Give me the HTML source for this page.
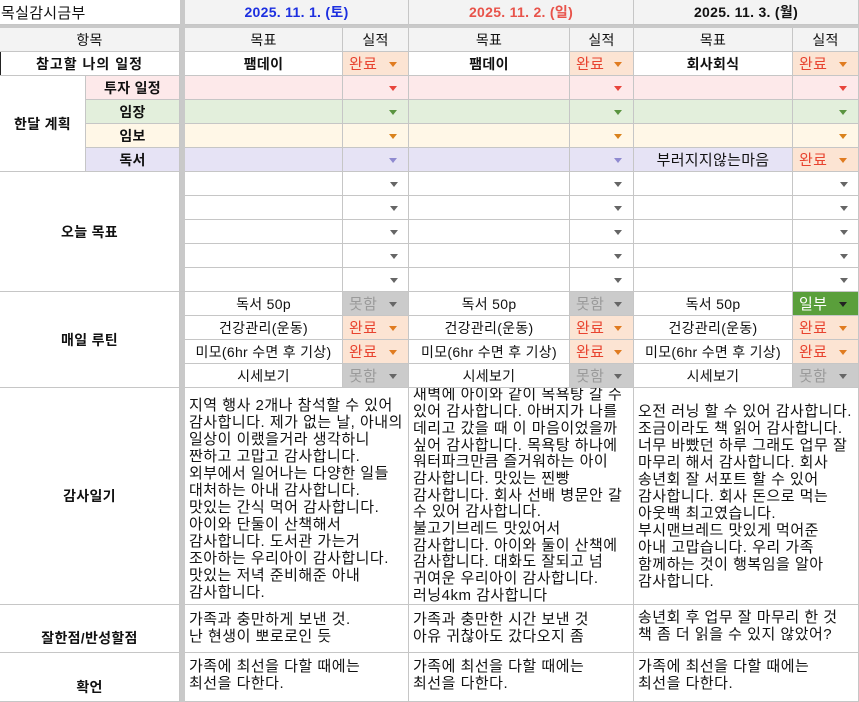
<!DOCTYPE html>
<html><head><meta charset="utf-8"><style>
*{margin:0;padding:0;box-sizing:border-box}
body{width:859px;height:702px;position:relative;background:#fff;font-family:"Liberation Sans","Noto Sans CJK KR",sans-serif;font-size:14px;color:#111;overflow:hidden}
.c{position:absolute;border-right:1px solid #c6c6c6;border-bottom:1px solid #c6c6c6;display:flex;align-items:center;justify-content:center;white-space:nowrap;letter-spacing:0.3px}
.b{font-weight:bold}
.h{background:#f3f3f3}
.dd{justify-content:flex-start;padding-left:6px;font-size:15px}
.t{position:absolute;right:11px;top:50%;margin-top:-2px;width:0;height:0;border-left:4px solid transparent;border-right:4px solid transparent;border-top:5px solid #666}
.or{background:#fce4d3;color:#e8432f}.or .t{border-top-color:#e07b20}
.gr{background:#cbcbcb;color:#9a9a9a}.gr .t{border-top-color:#666}
.gn{background:#5a9f3b;color:#fff}.gn .t{border-top-color:#222}
.pk{background:#fde9ea}.pk .t{border-top-color:#e8453c}
.ge{background:#e3efdc}.ge .t{border-top-color:#5a9440}
.ye{background:#fff7e7}.ye .t{border-top-color:#d9821d}
.pu{background:#e6e3f5}.pu .t{border-top-color:#8f8ad0}
.txt{align-items:flex-start;justify-content:flex-start;padding:0 4px;white-space:pre;line-height:17px;font-size:15px;letter-spacing:0.5px}
</style></head><body>
<div style="position:absolute;left:180px;top:0;width:5px;height:702px;background:#c9c9c9"></div>
<div style="position:absolute;left:0;top:25px;width:859px;height:3px;background:#c9c9c9"></div>
<div style="position:absolute;left:0;top:28px;width:1px;height:48px;background:#222"></div>

<div class="c" style="left:0;top:0;width:180px;height:25px;justify-content:flex-start;padding-left:1px;border-right:none;font-size:15px">목실감시금부</div>
<div class="c h b" style="left:185px;top:0;width:224px;height:25px;color:#1c2fe0">2025. 11. 1. (토)</div>
<div class="c h b" style="left:409px;top:0;width:225px;height:25px;color:#e8534a">2025. 11. 2. (일)</div>
<div class="c h b" style="left:634px;top:0;width:225px;height:25px">2025. 11. 3. (월)</div>

<div class="c h" style="left:0;top:28px;width:180px;height:24px">항목</div>
<div class="c h" style="left:185px;top:28px;width:158px;height:24px">목표</div>
<div class="c h" style="left:343px;top:28px;width:66px;height:24px">실적</div>
<div class="c h" style="left:409px;top:28px;width:161px;height:24px">목표</div>
<div class="c h" style="left:570px;top:28px;width:64px;height:24px">실적</div>
<div class="c h" style="left:634px;top:28px;width:159px;height:24px">목표</div>
<div class="c h" style="left:793px;top:28px;width:66px;height:24px">실적</div>

<div class="c b" style="left:0;top:52px;width:180px;height:24px;letter-spacing:1px">참고할 나의 일정</div>
<div class="c b" style="left:185px;top:52px;width:158px;height:24px">팸데이</div>
<div class="c dd or" style="left:343px;top:52px;width:66px;height:24px">완료<span class="t"></span></div>
<div class="c b" style="left:409px;top:52px;width:161px;height:24px">팸데이</div>
<div class="c dd or" style="left:570px;top:52px;width:64px;height:24px">완료<span class="t"></span></div>
<div class="c b" style="left:634px;top:52px;width:159px;height:24px">회사회식</div>
<div class="c dd or" style="left:793px;top:52px;width:66px;height:24px">완료<span class="t"></span></div>

<div class="c b" style="left:0;top:76px;width:86px;height:96px">한달 계획</div>
<div class="c b pk" style="left:86px;top:76px;width:94px;height:24px">투자 일정</div>
<div class="c b ge" style="left:86px;top:100px;width:94px;height:24px">임장</div>
<div class="c b ye" style="left:86px;top:124px;width:94px;height:24px">임보</div>
<div class="c b pu" style="left:86px;top:148px;width:94px;height:24px">독서</div>

<div class="c pk" style="left:185px;top:76px;width:158px;height:24px"></div><div class="c pk" style="left:343px;top:76px;width:66px;height:24px"><span class="t"></span></div>
<div class="c pk" style="left:409px;top:76px;width:161px;height:24px"></div><div class="c pk" style="left:570px;top:76px;width:64px;height:24px"><span class="t"></span></div>
<div class="c pk" style="left:634px;top:76px;width:159px;height:24px"></div><div class="c pk" style="left:793px;top:76px;width:66px;height:24px"><span class="t"></span></div>
<div class="c ge" style="left:185px;top:100px;width:158px;height:24px"></div><div class="c ge" style="left:343px;top:100px;width:66px;height:24px"><span class="t"></span></div>
<div class="c ge" style="left:409px;top:100px;width:161px;height:24px"></div><div class="c ge" style="left:570px;top:100px;width:64px;height:24px"><span class="t"></span></div>
<div class="c ge" style="left:634px;top:100px;width:159px;height:24px"></div><div class="c ge" style="left:793px;top:100px;width:66px;height:24px"><span class="t"></span></div>
<div class="c ye" style="left:185px;top:124px;width:158px;height:24px"></div><div class="c ye" style="left:343px;top:124px;width:66px;height:24px"><span class="t"></span></div>
<div class="c ye" style="left:409px;top:124px;width:161px;height:24px"></div><div class="c ye" style="left:570px;top:124px;width:64px;height:24px"><span class="t"></span></div>
<div class="c ye" style="left:634px;top:124px;width:159px;height:24px"></div><div class="c ye" style="left:793px;top:124px;width:66px;height:24px"><span class="t"></span></div>
<div class="c pu" style="left:185px;top:148px;width:158px;height:24px"></div><div class="c pu" style="left:343px;top:148px;width:66px;height:24px"><span class="t"></span></div>
<div class="c pu" style="left:409px;top:148px;width:161px;height:24px"></div><div class="c pu" style="left:570px;top:148px;width:64px;height:24px"><span class="t"></span></div>
<div class="c pu" style="left:634px;top:148px;width:159px;height:24px;font-size:15px">부러지지않는마음</div><div class="c dd or" style="left:793px;top:148px;width:66px;height:24px">완료<span class="t"></span></div>

<div class="c b" style="left:0;top:172px;width:180px;height:120px">오늘 목표</div>
<div style="position:absolute;left:185px;top:172px;width:674px;height:120px;background:
repeating-linear-gradient(to bottom,transparent 0,transparent 23px,#c6c6c6 23px,#c6c6c6 24px)"></div>
<div class="c" style="left:185px;top:172px;width:158px;height:120px;border-bottom:none"></div>
<div class="c" style="left:343px;top:172px;width:66px;height:120px;border-bottom:none"></div>
<div class="c" style="left:409px;top:172px;width:161px;height:120px;border-bottom:none"></div>
<div class="c" style="left:570px;top:172px;width:64px;height:120px;border-bottom:none"></div>
<div class="c" style="left:634px;top:172px;width:159px;height:120px;border-bottom:none"></div>
<div class="c" style="left:793px;top:172px;width:66px;height:120px;border-bottom:none"></div>
<div style="position:absolute;left:0;top:291px;width:859px;height:1px;background:#c6c6c6"></div>
<div class="c" style="left:343px;top:172px;width:66px;height:24px;border:none"><span class="t"></span></div>
<div class="c" style="left:343px;top:196px;width:66px;height:24px;border:none"><span class="t"></span></div>
<div class="c" style="left:343px;top:220px;width:66px;height:24px;border:none"><span class="t"></span></div>
<div class="c" style="left:343px;top:244px;width:66px;height:24px;border:none"><span class="t"></span></div>
<div class="c" style="left:343px;top:268px;width:66px;height:24px;border:none"><span class="t"></span></div>
<div class="c" style="left:570px;top:172px;width:63px;height:24px;border:none"><span class="t"></span></div>
<div class="c" style="left:570px;top:196px;width:63px;height:24px;border:none"><span class="t"></span></div>
<div class="c" style="left:570px;top:220px;width:63px;height:24px;border:none"><span class="t"></span></div>
<div class="c" style="left:570px;top:244px;width:63px;height:24px;border:none"><span class="t"></span></div>
<div class="c" style="left:570px;top:268px;width:63px;height:24px;border:none"><span class="t"></span></div>
<div class="c" style="left:793px;top:172px;width:66px;height:24px;border:none"><span class="t"></span></div>
<div class="c" style="left:793px;top:196px;width:66px;height:24px;border:none"><span class="t"></span></div>
<div class="c" style="left:793px;top:220px;width:66px;height:24px;border:none"><span class="t"></span></div>
<div class="c" style="left:793px;top:244px;width:66px;height:24px;border:none"><span class="t"></span></div>
<div class="c" style="left:793px;top:268px;width:66px;height:24px;border:none"><span class="t"></span></div>

<div class="c b" style="left:0;top:292px;width:180px;height:96px">매일 루틴</div>
<div class="c" style="left:185px;top:292px;width:158px;height:24px">독서 50p</div>
<div class="c dd gr" style="left:343px;top:292px;width:66px;height:24px">못함<span class="t"></span></div>
<div class="c" style="left:409px;top:292px;width:161px;height:24px">독서 50p</div>
<div class="c dd gr" style="left:570px;top:292px;width:64px;height:24px">못함<span class="t"></span></div>
<div class="c" style="left:634px;top:292px;width:159px;height:24px">독서 50p</div>
<div class="c dd gn" style="left:793px;top:292px;width:66px;height:24px">일부<span class="t"></span></div>

<div class="c" style="left:185px;top:316px;width:158px;height:24px">건강관리(운동)</div>
<div class="c dd or" style="left:343px;top:316px;width:66px;height:24px">완료<span class="t"></span></div>
<div class="c" style="left:409px;top:316px;width:161px;height:24px">건강관리(운동)</div>
<div class="c dd or" style="left:570px;top:316px;width:64px;height:24px">완료<span class="t"></span></div>
<div class="c" style="left:634px;top:316px;width:159px;height:24px">건강관리(운동)</div>
<div class="c dd or" style="left:793px;top:316px;width:66px;height:24px">완료<span class="t"></span></div>

<div class="c" style="left:185px;top:340px;width:158px;height:24px">미모(6hr 수면 후 기상)</div>
<div class="c dd or" style="left:343px;top:340px;width:66px;height:24px">완료<span class="t"></span></div>
<div class="c" style="left:409px;top:340px;width:161px;height:24px">미모(6hr 수면 후 기상)</div>
<div class="c dd or" style="left:570px;top:340px;width:64px;height:24px">완료<span class="t"></span></div>
<div class="c" style="left:634px;top:340px;width:159px;height:24px">미모(6hr 수면 후 기상)</div>
<div class="c dd or" style="left:793px;top:340px;width:66px;height:24px">완료<span class="t"></span></div>

<div class="c" style="left:185px;top:364px;width:158px;height:24px">시세보기</div>
<div class="c dd gr" style="left:343px;top:364px;width:66px;height:24px">못함<span class="t"></span></div>
<div class="c" style="left:409px;top:364px;width:161px;height:24px">시세보기</div>
<div class="c dd gr" style="left:570px;top:364px;width:64px;height:24px">못함<span class="t"></span></div>
<div class="c" style="left:634px;top:364px;width:159px;height:24px">시세보기</div>
<div class="c dd gr" style="left:793px;top:364px;width:66px;height:24px">못함<span class="t"></span></div>

<div class="c b" style="left:0;top:388px;width:180px;height:217px">감사일기</div>
<div class="c txt" style="left:185px;top:388px;width:224px;height:217px;padding-top:9px">지역 행사 2개나 참석할 수 있어
감사합니다. 제가 없는 날, 아내의
일상이 이랬을거라 생각하니
짠하고 고맙고 감사합니다.
외부에서 일어나는 다양한 일들
대처하는 아내 감사합니다.
맛있는 간식 먹어 감사합니다.
아이와 단둘이 산책해서
감사합니다. 도서관 가는거
조아하는 우리아이 감사합니다.
맛있는 저녁 준비해준 아내
감사합니다.</div>
<div class="c txt" style="left:409px;top:388px;width:225px;height:217px;line-height:16.7px;padding-top:0;overflow:hidden;align-items:center">새벽에 아이와 같이 목욕탕 갈 수
있어 감사합니다. 아버지가 나를
데리고 갔을 때 이 마음이었을까
싶어 감사합니다. 목욕탕 하나에
워터파크만큼 즐거워하는 아이
감사합니다. 맛있는 찐빵
감사합니다. 회사 선배 병문안 갈
수 있어 감사합니다.
불고기브레드 맛있어서
감사합니다. 아이와 둘이 산책에
감사합니다. 대화도 잘되고 넘
귀여운 우리아이 감사합니다.
러닝4km 감사합니다</div>
<div class="c txt" style="left:634px;top:388px;width:225px;height:217px;padding-top:15px">오전 러닝 할 수 있어 감사합니다.
조금이라도 책 읽어 감사합니다.
너무 바빴던 하루 그래도 업무 잘
마무리 해서 감사합니다. 회사
송년회 잘 서포트 할 수 있어
감사합니다. 회사 돈으로 먹는
아웃백 최고였습니다.
부시맨브레드 맛있게 먹어준
아내 고맙습니다. 우리 가족
함께하는 것이 행복임을 알아
감사합니다.</div>

<div class="c b" style="left:0;top:605px;width:180px;height:48px;align-items:flex-end;padding-bottom:4px">잘한점/반성할점</div>
<div class="c txt" style="left:185px;top:605px;width:224px;height:48px;padding-top:6px">가족과 충만하게 보낸 것.
난 현생이 뽀로로인 듯</div>
<div class="c txt" style="left:409px;top:605px;width:225px;height:48px;padding-top:6px">가족과 충만한 시간 보낸 것
아유 귀찮아도 갔다오지 좀</div>
<div class="c txt" style="left:634px;top:605px;width:225px;height:48px;padding-top:4px">송년회 후 업무 잘 마무리 한 것
책 좀 더 읽을 수 있지 않았어?</div>

<div class="c b" style="left:0;top:653px;width:180px;height:49px;align-items:flex-end;padding-bottom:4px">확언</div>
<div class="c txt" style="left:185px;top:653px;width:224px;height:49px;padding-top:5px">가족에 최선을 다할 때에는
최선을 다한다.</div>
<div class="c txt" style="left:409px;top:653px;width:225px;height:49px;padding-top:5px">가족에 최선을 다할 때에는
최선을 다한다.</div>
<div class="c txt" style="left:634px;top:653px;width:225px;height:49px;padding-top:5px">가족에 최선을 다할 때에는
최선을 다한다.</div>
</body></html>
